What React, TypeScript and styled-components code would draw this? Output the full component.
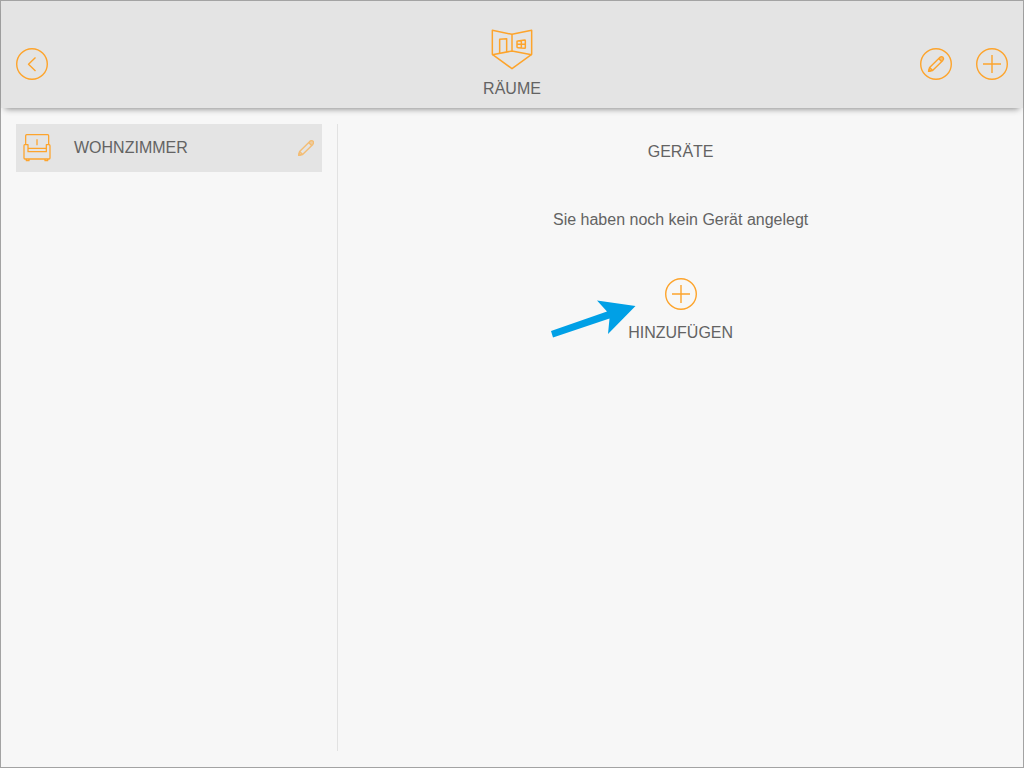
import React from "react";
import styled, { createGlobalStyle } from "styled-components";

const accent = "#fda42c";

const GlobalStyle = createGlobalStyle`
  *, *::before, *::after { box-sizing: border-box; }
  body {
    margin: 0;
    background: #f7f7f7;
    color: #636363;
    font: 16px/20px "Liberation Sans", Arial, sans-serif;
  }
  h1, h2, p, ul { margin: 0; padding: 0; font: inherit; }
  button { font: inherit; color: inherit; background: none; border: 0; padding: 0; cursor: pointer; }
  svg { display: block; }
`;

const Page = styled.div`
  display: flex;
  flex-direction: column;
  min-height: 100vh;
  border: 1px solid #a3a3a3;
`;

const Header = styled.header`
  display: grid;
  grid-template-columns: 1fr auto 1fr;
  align-items: center;
  padding: 28px 15px 9px;
  background: #e4e4e4;
  box-shadow: 0 5px 6px -4px rgba(0, 0, 0, 0.45);
`;

const Title = styled.div`
  display: flex;
  flex-direction: column;
  align-items: center;
  gap: 9px;
`;

const Actions = styled.div<{ $end?: boolean }>`
  display: flex;
  gap: 24px;
  justify-content: ${(p) => (p.$end ? "flex-end" : "flex-start")};
`;

const IconButton = styled.button`
  width: 32px;
  height: 32px;
`;

const Main = styled.main`
  flex: 1;
  display: flex;
  padding: 16px 0;
`;

const Sidebar = styled.nav`
  flex: 0 0 33%;
  padding: 0 15px;
  border-right: 1px solid #e2e2e2;
`;

const RoomList = styled.ul`
  list-style: none;
`;

const RoomRow = styled.li`
  display: flex;
  align-items: center;
  height: 48px;
  padding: 0 8px 0 7px;
  background: #e4e4e4;
`;

const RoomButton = styled.button`
  flex: 1;
  display: flex;
  align-items: center;
  gap: 23px;
  text-align: left;
`;

const EditButton = styled.button`
  opacity: 0.6;
`;

const Devices = styled.section`
  flex: 1;
  display: flex;
  flex-direction: column;
  align-items: center;
  gap: 48px;
  padding-top: 18px;
`;

const AddButton = styled.button`
  position: relative;
  display: flex;
  flex-direction: column;
  align-items: center;
  gap: 13px;
`;

const Pointer = styled.svg`
  position: absolute;
  right: 97px;
  top: 22px;
`;

const Drawing = styled.svg`
  fill: none;
  stroke: ${accent};
  stroke-linejoin: round;
`;

const Circle = () => <circle cx="16" cy="16" r="15.3" strokeWidth="1.4" />;

const PencilPaths = () => (
  <>
    <path d="M8.6 23.4 9.6 19.5 19.8 9.4Q21.5 8 23 9.2 24.2 10.8 22.8 12.4L12.6 22.5Z" />
    <path d="M18.6 10.6 21.6 13.6M9.6 19.5 12.6 22.5" />
    <path d="M19.8 9.4Q21.5 8 23 9.2 24.2 10.8 22.8 12.4L21.6 13.6 18.6 10.6Z" fill={accent} fillOpacity="0.6" stroke="none" />
    <path d="M8.6 23.4 9.2 21.2 10.8 22.8Z" fill={accent} />
  </>
);

const BackIcon = () => (
  <Drawing width="32" height="32" viewBox="0 0 32 32" aria-hidden="true">
    <Circle />
    <path d="M19.5 9.5 12.5 16.3 19.5 23" strokeWidth="1.4" />
  </Drawing>
);

const PlusIcon = () => (
  <Drawing width="32" height="32" viewBox="0 0 32 32" aria-hidden="true">
    <Circle />
    <path d="M16 7V25M7 16H25" strokeWidth="1.4" />
  </Drawing>
);

const PencilCircleIcon = () => (
  <Drawing width="32" height="32" viewBox="0 0 32 32" strokeWidth="1.4" aria-hidden="true">
    <Circle />
    <PencilPaths />
  </Drawing>
);

const PencilIcon = () => (
  <Drawing width="16" height="16" viewBox="8 8 16 16" strokeWidth="1.4" aria-hidden="true">
    <PencilPaths />
  </Drawing>
);

const RoomsIcon = () => (
  <Drawing width="42" height="41" viewBox="57 27 126 123" strokeWidth="4.5" aria-hidden="true">
    <path d="M61 31 120 43 179 31V103L120 146 61 103Z" />
    <path d="M61 104 120 93 179 104M120 43V93" />
    <path d="M83 99V58L104 56V96" />
    <path d="M137 63 158 60Q160 60 160 62V83Q160 85 158 85L138 83Q135 83 135 81V65Q135 63 137 63ZM148 62V84M135 73H160" />
  </Drawing>
);

const ArmchairIcon = () => (
  <Drawing width="28" height="28" viewBox="45 53 84 84" strokeWidth="3.8" aria-hidden="true">
    <path d="M53 85V58Q53 55 56 55H119Q122 55 122 58V85" />
    <path d="M87 69V87" />
    <path d="M53 85H50Q48 85 48 88V125Q48 128 51 128H123Q126 128 126 125V88Q126 85 123 85H115V106H60V85H53" />
    <path d="M60 96H115M55 128V133H63V128M111 128V133H119V128" />
  </Drawing>
);

export default function App() {
  return (
    <Page>
      <GlobalStyle />
      <Header>
        <Actions>
          <IconButton type="button" aria-label="Zurück"><BackIcon /></IconButton>
        </Actions>
        <Title>
          <RoomsIcon />
          <h1>RÄUME</h1>
        </Title>
        <Actions $end>
          <IconButton type="button" aria-label="Bearbeiten"><PencilCircleIcon /></IconButton>
          <IconButton type="button" aria-label="Raum hinzufügen"><PlusIcon /></IconButton>
        </Actions>
      </Header>
      <Main>
        <Sidebar aria-label="Räume">
          <RoomList>
            <RoomRow>
              <RoomButton type="button">
                <ArmchairIcon />
                WOHNZIMMER
              </RoomButton>
              <EditButton type="button" aria-label="Wohnzimmer bearbeiten"><PencilIcon /></EditButton>
            </RoomRow>
          </RoomList>
        </Sidebar>
        <Devices>
          <h2>GERÄTE</h2>
          <p>Sie haben noch kein Gerät angelegt</p>
          <AddButton type="button">
            <PlusIcon />
            HINZUFÜGEN
            <Pointer width="86" height="38" viewBox="0 0 86 38" aria-hidden="true">
              <path d="M1 31 57 11.5 47 .5 85.5 6 58 34 59.5 18.5 3 37.5Z" fill="#00a0e6" />
            </Pointer>
          </AddButton>
        </Devices>
      </Main>
    </Page>
  );
}
